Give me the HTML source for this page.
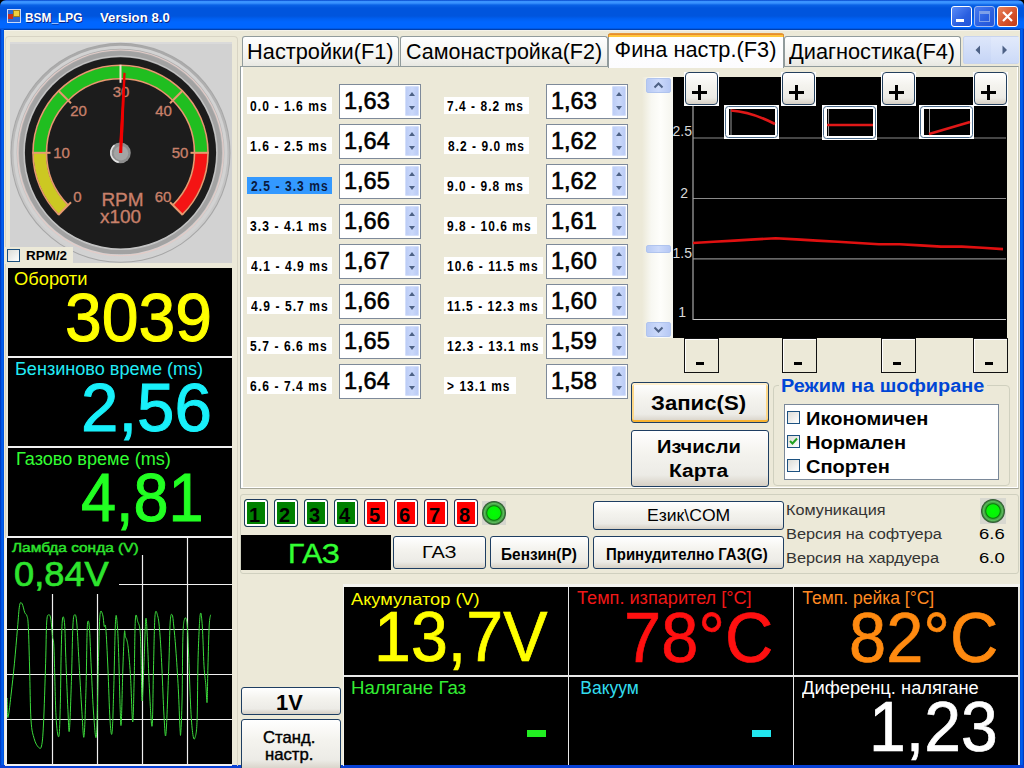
<!DOCTYPE html>
<html><head><meta charset="utf-8">
<style>
*{margin:0;padding:0;box-sizing:border-box}
html,body{width:1024px;height:768px;overflow:hidden}
body{position:relative;background:#ECE9D8;font-family:"Liberation Sans",sans-serif;color:#000}
.a{position:absolute}
.t{position:absolute;white-space:nowrap;line-height:1}
.btn{position:absolute;border:1px solid #1E3E62;border-radius:3px;background:linear-gradient(#FFFFFF 0%,#F4F3EE 40%,#ECEBE6 80%,#D6D0C5 100%);}
.blk{position:absolute;background:#000}
.tab{background:linear-gradient(#FFFFFF,#F3F3EF 70%,#E8E8E2);border:1px solid #919B9C;border-bottom:none;border-radius:3px 3px 0 0}
.lbl{font-size:13.5px;font-weight:bold}
.inp{width:82px;height:35px;border:1px solid #7E8A9A;background:#fff}
.val{font-size:23.5px;-webkit-text-stroke:0.6px #000}
.spin{width:14px;height:30px;background:linear-gradient(90deg,#BACBF5,#CAD8FA 50%,#B8C9F4);border-radius:2px;box-shadow:inset 0 0 0 1px #D4DFFA}
.spin::before{content:"";position:absolute;left:3.5px;top:6px;width:0;height:0;border-left:3.5px solid transparent;border-right:3.5px solid transparent;border-bottom:4px solid #4D6185}
.spin::after{content:"";position:absolute;left:3.5px;top:20px;width:0;height:0;border-left:3.5px solid transparent;border-right:3.5px solid transparent;border-top:4px solid #4D6185}
.sbtn{background:linear-gradient(90deg,#B8CAF4,#CCDAFB 50%,#B6C8F4);border:1px solid #B0C4EE;border-radius:2px}
.cb{width:13px;height:13px;border:1px solid #1C5180;background:linear-gradient(135deg,#DCDCD7,#FFFFFF)}
.led{width:24px;height:28px;border:1px solid #1E3A5E;border-radius:3px;box-shadow:inset 0 0 0 2px #fff}
.grn{width:24px;height:24px;border-radius:50%;background:radial-gradient(circle closest-side,#00FF00 0%,#08F008 52%,#067A06 60%,#3E9E3E 68%,#5CBC5C 80%,#3A7A3A 90%,#2C4A2C 100%)}
.inf{font-size:16px;color:#333}
.dl{font-size:16.5px}
.big{font-size:69px;transform:scaleX(0.93);transform-origin:left}
</style></head><body>
<!-- title bar -->
<div class="a" style="left:0;top:0;width:1024px;height:10px;background:#000"></div>
<div class="a" style="left:0;top:0;width:1024px;height:30px;background:linear-gradient(#0040C8 0px,#3A93FF 1.5px,#3A93FF 3px,#0A62E6 5px,#0055DD 8px,#0055DD 16px,#0060F2 19px,#0066FF 22px,#0066FF 28px,#0040B0 29.5px,#0038A0 30px);border-radius:6px 6px 0 0"></div>
<div class="a" style="left:0;top:29px;width:4px;height:739px;background:linear-gradient(90deg,#0030B0,#0058E8 40%,#0060F0 70%,#0048D0)"></div><div class="a" style="left:4px;top:30px;width:1016px;height:1px;background:#F4F2EA"></div>
<div class="a" style="left:1020px;top:29px;width:4px;height:739px;background:linear-gradient(90deg,#0048D0,#0060F0 30%,#0058E8 60%,#0030B0)"></div>
<div class="a" style="left:0;top:765px;width:1024px;height:3px;background:#0841D6"></div>
<!-- icon -->
<div class="a" style="left:7px;top:9px;width:14px;height:14px;border:1px solid #C8D8F8;background:#2A68D8"></div>
<div class="a" style="left:8px;top:14px;width:5px;height:5px;background:#C83020"></div>
<div class="a" style="left:13px;top:10px;width:7px;height:7px;background:#F0D040;border:1px solid #A08020"></div>
<!-- title buttons -->
<div class="a" style="left:951px;top:6px;width:21px;height:21px;border:1px solid #fff;border-radius:3px;background:linear-gradient(135deg,#5A8CF8,#2A5FE0 60%,#2356D8)"></div>
<div class="a" style="left:956px;top:19px;width:8px;height:3px;background:#fff"></div>
<div class="a" style="left:974px;top:6px;width:21px;height:21px;border:1px solid #9DB8F0;border-radius:3px;background:linear-gradient(135deg,#4A7CF0,#2A5FE0 60%,#2356D8)"></div>
<div class="a" style="left:979px;top:11px;width:11px;height:11px;border:1px solid #7EA0E8;border-top-width:3px"></div>
<div class="a" style="left:997px;top:6px;width:21px;height:21px;border:1px solid #fff;border-radius:3px;background:linear-gradient(135deg,#E8845C,#D4502A 60%,#C03C18)"></div>
<svg class="a" style="left:997px;top:6px" width="21" height="21"><path d="M6 6L15 15M15 6L6 15" stroke="#fff" stroke-width="2.2"/></svg>

<!-- LEFT COLUMN -->
<div class="a" style="left:5px;top:36px;width:233px;height:730px;border:1px solid #D8D4C4;border-bottom:none;border-radius:4px 4px 0 0"></div>
<div class="a" style="left:10px;top:42px;width:222px;height:221px;background:#D2D2D2;box-shadow:inset 0 2px 0 #DADADA"></div>
<svg class="a" style="left:10px;top:42px" width="222" height="221" viewBox="10 42 222 221">
 <defs>
  <radialGradient id="ring" cx="0.5" cy="0.5" r="0.5">
   <stop offset="0.86" stop-color="#8E8E8E"/>
   <stop offset="0.9" stop-color="#E8E8E8"/>
   <stop offset="0.95" stop-color="#B8B8B8"/>
   <stop offset="1" stop-color="#A8A8A8"/>
  </radialGradient>
  <linearGradient id="ringl" x1="0" y1="0" x2="0" y2="1">
   <stop offset="0" stop-color="#A8A8A8"/>
   <stop offset="0.5" stop-color="#BDBDBD"/>
   <stop offset="1" stop-color="#D4D4D4"/>
  </linearGradient>
  <radialGradient id="hub" cx="0.4" cy="0.35" r="0.7">
   <stop offset="0" stop-color="#C8C8C8"/>
   <stop offset="0.55" stop-color="#A8A8A8"/>
   <stop offset="1" stop-color="#6A6A6A"/>
  </radialGradient>
 </defs>
 <circle cx="120.5" cy="152.8" r="110" fill="#A6A6A6"/>
 <circle cx="120.5" cy="152.8" r="109" fill="url(#ringl)"/>
 <circle cx="120.5" cy="152.8" r="105.5" fill="none" stroke="#D2D2D2" stroke-width="3"/>
 <circle cx="120.5" cy="152.8" r="102.8" fill="none" stroke="#E2CCC8" stroke-width="1.2"/>
 <circle cx="120.5" cy="152.8" r="99" fill="none" stroke="#A2A2A2" stroke-width="5"/>
 <circle cx="120.5" cy="152.8" r="96.6" fill="none" stroke="#C4C4C4" stroke-width="1.2"/>
 <circle cx="120.5" cy="152.8" r="95.6" fill="#1C1C1C"/>
<path d="M58.98 214.32 A87.00 87.00 0 0 1 33.50 152.80 L46.00 152.80 A74.50 74.50 0 0 0 67.82 205.48 Z" fill="#CCC822"/>
<path d="M33.50 152.80 A87.00 87.00 0 0 1 207.50 152.80 L195.00 152.80 A74.50 74.50 0 0 0 46.00 152.80 Z" fill="#20BE20"/>
<path d="M207.50 152.80 A87.00 87.00 0 0 1 182.02 214.32 L173.18 205.48 A74.50 74.50 0 0 0 195.00 152.80 Z" fill="#F41414"/>
<path d="M58.63 214.67 A87.50 87.50 0 1 1 182.37 214.67" fill="none" stroke="#E89A70" stroke-width="1.6"/>
<path d="M68.17 205.13 A74.00 74.00 0 1 1 172.83 205.13" fill="none" stroke="#E89A70" stroke-width="1.6"/>

<line x1="58.27" y1="215.03" x2="71.00" y2="202.30" stroke="#E89A70" stroke-width="2"/>
<line x1="32.50" y1="152.80" x2="50.50" y2="152.80" stroke="#E89A70" stroke-width="2"/>
<line x1="58.27" y1="90.57" x2="71.00" y2="103.30" stroke="#E89A70" stroke-width="2"/>
<line x1="120.50" y1="64.80" x2="120.50" y2="82.80" stroke="#F4E0D0" stroke-width="2"/>
<line x1="182.73" y1="90.57" x2="170.00" y2="103.30" stroke="#E89A70" stroke-width="2"/>
<line x1="208.50" y1="152.80" x2="190.50" y2="152.80" stroke="#E89A70" stroke-width="2"/>
<line x1="182.73" y1="215.03" x2="170.00" y2="202.30" stroke="#E89A70" stroke-width="2"/>
 <g font-family="Liberation Sans" font-size="15" fill="#C8806A" stroke="#C8806A" stroke-width="0.35" text-anchor="middle">
  <text x="121" y="97">30</text>
  <text x="78.5" y="116">20</text>
  <text x="163.5" y="116">40</text>
  <text x="61.5" y="158">10</text>
  <text x="180" y="158">50</text>
  <text x="77.5" y="201.5">0</text>
  <text x="163" y="201.5">60</text>
  <text x="122.5" y="206" font-size="19">RPM</text>
  <text x="120.5" y="223" font-size="19">x100</text>
 </g>
 <path d="M118.8 152.8 L123.4 72.6 L125.6 73 L122.4 152.8 Z" fill="#F00000"/>
 <circle cx="120.4" cy="152.8" r="10.4" fill="#8E8E8E"/>
 <circle cx="120.4" cy="152.8" r="9.6" fill="none" stroke="#E4E4E4" stroke-width="1.6" stroke-dasharray="22 60" transform="rotate(100 120.4 152.8)"/>
 <circle cx="121" cy="153.2" r="7.2" fill="#A4A4A4"/>
 <path d="M119 153 L123.6 80 L125.2 80 L122.2 153 Z" fill="#F00000"/>
</svg>
<div class="a" style="left:5px;top:247px;width:68px;height:17px;background:#ECE9D8"></div>
<div class="a" style="left:7px;top:249px;width:13px;height:13px;border:1px solid #1C5180;background:linear-gradient(135deg,#DCDCD7,#FFFFFF)"></div>

<div class="blk" style="left:8px;top:268px;width:224px;height:88px"></div>
<div class="a" style="left:8px;top:356px;width:224px;height:2px;background:#F0F0F0"></div>

<div class="blk" style="left:8px;top:358px;width:224px;height:88px"></div>
<div class="a" style="left:8px;top:446px;width:224px;height:2px;background:#F0F0F0"></div>

<div class="blk" style="left:8px;top:448px;width:224px;height:88px"></div>
<div class="a" style="left:6px;top:536px;width:227px;height:2px;background:#F0F0F0"></div>

<!-- lambda -->
<div class="a" style="left:5px;top:538px;width:227px;height:228px;background:#F2F2F2"></div>
<div class="blk" style="left:7px;top:538px;width:225px;height:226px"></div>
<svg class="a" style="left:7px;top:538px" width="225" height="226" viewBox="7 538 225 226">
 <g stroke="#F0F0F0" stroke-width="1.2">
  <line x1="7" y1="629.5" x2="232" y2="629.5"/>
  <line x1="7" y1="674.5" x2="232" y2="674.5"/>
  <line x1="7" y1="719.5" x2="232" y2="719.5"/>
  <line x1="119" y1="584.5" x2="232" y2="584.5"/>
  <line x1="52.5" y1="594" x2="52.5" y2="764"/>
  <line x1="97.5" y1="594" x2="97.5" y2="764"/>
  <line x1="142.5" y1="555" x2="142.5" y2="764"/>
  <line x1="187.5" y1="538" x2="187.5" y2="764"/>
 </g>
 <path fill="none" stroke="#3CDC3C" stroke-width="1.0" d="M7.10 698.00 C7.17 701.15 7.21 713.24 7.50 716.00 C7.79 718.76 8.09 717.77 8.75 713.75 C9.41 709.73 10.26 701.75 11.25 693.00 C12.24 684.25 13.31 675.07 14.40 663.75 C15.49 652.43 16.59 638.51 17.50 628.30 C18.41 618.09 18.80 609.70 19.60 605.40 C20.41 601.10 21.19 602.47 22.10 603.75 C23.01 605.03 23.96 610.59 24.80 612.70 C25.64 614.81 26.29 613.43 26.90 615.80 C27.51 618.17 27.83 617.12 28.30 626.25 C28.77 635.38 29.13 651.59 29.60 668.00 C30.07 684.41 30.20 707.62 31.00 720.00 C31.80 732.38 32.92 734.02 34.20 738.75 C35.48 743.48 37.02 745.73 38.30 747.00 C39.58 748.27 40.59 750.02 41.50 746.00 C42.41 741.98 42.78 738.39 43.50 724.00 C44.22 709.61 45.04 681.60 45.60 663.75 C46.16 645.90 46.15 630.57 46.70 622.00 C47.25 613.43 48.03 615.32 48.75 614.80 C49.47 614.27 50.14 615.17 50.80 619.00 C51.46 622.83 51.94 631.45 52.50 636.70 C53.06 641.95 53.39 635.16 54.00 649.00 C54.61 662.84 55.17 700.45 56.00 715.80 C56.83 731.15 58.02 737.79 58.75 736.70 C59.48 735.62 59.76 724.77 60.20 709.60 C60.64 694.43 60.85 665.86 61.25 650.00 C61.65 634.14 61.91 623.55 62.50 619.00 C63.09 614.45 64.02 617.26 64.60 624.00 C65.18 630.74 65.22 642.52 65.80 657.50 C66.38 672.48 67.27 696.84 67.90 709.60 C68.53 722.36 68.77 735.93 69.40 730.40 C70.03 724.87 70.89 696.27 71.50 678.00 C72.11 659.73 72.36 637.06 72.90 626.00 C73.44 614.94 73.93 615.50 74.60 614.80 C75.27 614.10 75.97 614.53 76.70 622.00 C77.43 629.47 77.84 641.80 78.75 657.50 C79.66 673.20 80.98 697.84 81.90 711.70 C82.82 725.56 83.28 740.72 84.00 736.70 C84.72 732.68 85.46 706.99 86.00 688.75 C86.54 670.51 86.73 644.36 87.10 632.50 C87.47 620.64 87.66 621.37 88.10 621.00 C88.54 620.63 89.05 622.17 89.60 630.40 C90.15 638.62 90.52 653.05 91.25 668.00 C91.98 682.95 92.83 704.14 93.75 715.80 C94.67 727.45 95.67 744.80 96.50 734.60 C97.33 724.40 97.89 678.47 98.50 657.50 C99.11 636.53 99.27 622.27 100.00 614.80 C100.73 607.33 101.97 612.80 102.70 614.80 C103.44 616.80 103.66 623.89 104.20 626.25 C104.74 628.61 105.15 620.99 105.80 628.30 C106.45 635.61 107.17 651.95 107.90 668.00 C108.64 684.05 109.27 708.71 110.00 720.00 C110.73 731.29 111.44 737.97 112.10 732.50 C112.76 727.03 113.14 708.52 113.75 688.75 C114.36 668.98 114.94 630.13 115.60 619.50 C116.26 608.87 116.95 621.35 117.50 628.00 C118.05 634.65 118.28 643.22 118.75 657.50 C119.22 671.78 119.76 698.14 120.20 709.60 C120.64 721.06 120.78 730.28 121.25 723.00 C121.72 715.72 122.35 683.84 122.90 668.00 C123.45 652.16 123.96 637.98 124.40 632.50 C124.84 627.02 124.93 635.21 125.40 636.70 C125.87 638.19 126.56 638.50 127.10 641.00 C127.64 643.50 127.89 644.52 128.50 651.00 C129.11 657.48 129.87 665.58 130.60 678.00 C131.33 690.42 132.07 722.00 132.70 722.00 C133.33 722.00 133.73 696.02 134.20 678.00 C134.67 659.98 134.75 628.80 135.40 619.00 C136.05 609.20 137.09 620.08 137.90 622.00 C138.71 623.92 139.46 624.58 140.00 630.00 C140.54 635.42 140.63 640.58 141.00 653.00 C141.37 665.42 141.54 700.21 142.10 701.00 C142.66 701.79 143.55 671.85 144.20 657.50 C144.85 643.15 145.26 622.64 145.80 619.00 C146.34 615.36 146.67 624.49 147.30 636.70 C147.93 648.91 148.56 673.12 149.40 688.75 C150.24 704.38 151.38 729.63 152.10 726.00 C152.82 722.37 152.99 687.25 153.50 668.00 C154.01 648.75 154.27 625.10 155.00 616.00 C155.73 606.90 156.86 613.11 157.70 616.00 C158.54 618.89 159.06 623.40 159.80 632.50 C160.54 641.60 161.17 653.42 161.90 668.00 C162.63 682.58 163.28 704.34 164.00 715.80 C164.72 727.26 165.17 741.87 166.00 733.50 C166.83 725.13 168.02 687.51 168.75 668.00 C169.48 648.49 169.60 631.31 170.20 622.00 C170.80 612.69 171.58 614.10 172.20 614.80 C172.82 615.50 173.12 620.01 173.75 626.00 C174.38 631.99 175.00 638.02 175.80 649.00 C176.60 659.98 177.57 674.87 178.30 688.75 C179.03 702.63 179.56 720.64 180.00 728.30 C180.44 735.96 180.43 737.63 180.80 732.50 C181.17 727.37 181.73 715.76 182.10 699.00 C182.47 682.24 182.46 650.70 182.90 636.70 C183.34 622.70 183.87 621.22 184.60 619.00 C185.33 616.78 186.37 617.26 187.10 624.00 C187.83 630.74 188.10 642.52 188.75 657.50 C189.40 672.48 190.07 696.11 190.80 709.60 C191.53 723.09 192.17 729.68 192.90 734.60 C193.63 739.52 194.27 740.25 195.00 737.70 C195.73 735.15 196.56 734.03 197.10 720.00 C197.64 705.97 197.56 675.91 198.10 657.50 C198.64 639.09 199.46 620.31 200.20 614.80 C200.94 609.29 201.64 617.08 202.30 626.00 C202.97 634.92 203.39 655.54 204.00 665.80 C204.61 676.05 205.26 678.21 205.80 684.60 C206.34 690.99 206.73 705.20 207.10 702.30 C207.47 699.39 207.53 681.35 207.90 668.00 C208.27 654.65 208.73 635.31 209.20 626.00 C209.67 616.69 210.35 616.76 210.60 614.80"/>
</svg>
<div class="blk" style="left:7px;top:538px;width:135px;height:17px"></div>
<div class="blk" style="left:7px;top:555px;width:112px;height:39px"></div>

<!-- RIGHT: tabs -->
<!-- tab strip -->
<div class="a" style="left:240px;top:66px;width:779px;height:423px;border:1px solid #919B9C;border-bottom-color:#A8A898;border-right-color:#C8C8B8;background:#ECE9D8;box-shadow:inset -1px -1px 0 #FFFFFF"></div>
<div class="a" style="left:241px;top:67px;width:2px;height:421px;background:#fff"></div>
<div class="a tab" style="left:242px;top:36px;width:157px;height:30px"></div>
<div class="a tab" style="left:400px;top:36px;width:208px;height:30px"></div>
<div class="a tab" style="left:784px;top:36px;width:177px;height:30px"></div>
<div class="a" style="left:608px;top:34px;width:176px;height:34px;background:linear-gradient(#FFFFFF,#FCFCFE);border:1px solid #919B9C;border-bottom:none;border-top:none"></div>
<div class="a" style="left:608px;top:33px;width:176px;height:4px;background:#E68B2C;border-radius:3px 3px 0 0;border-top:1px solid #E69A3C"></div>
<div class="a" style="left:609px;top:35px;width:174px;height:2px;background:#FFC73C"></div>
<div class="a" style="left:963px;top:36px;width:56px;height:28px;background:linear-gradient(#DDE6FA,#C6D5F6);border:1px solid #C8D4EE;border-radius:2px"></div>
<div class="a" style="left:991px;top:37px;width:28px;height:26px;background:linear-gradient(#E2EAFB,#CCDAF8)"></div><svg class="a" style="left:963px;top:36px" width="56" height="28"><path d="M12.5 14 L17 9.5 L17 18.5Z" fill="#4D6185"/><path d="M44 14 L39.5 9.5 L39.5 18.5Z" fill="#4D6185"/></svg>

<div class="a" style="left:247px;top:97px;width:85px;height:17px;background:#FFFFFF"></div>
<div class="a inp" style="left:339px;top:84px"></div><div class="t val" style="left:344px;top:90px">1,63</div>
<div class="a spin" style="left:405px;top:86px"></div>
<div class="a" style="left:444px;top:97px;width:85px;height:17px;background:#fff"></div>
<div class="a inp" style="left:546px;top:84px"></div><div class="t val" style="left:551px;top:90px">1,63</div>
<div class="a spin" style="left:612px;top:86px"></div>
<div class="a" style="left:247px;top:137px;width:85px;height:17px;background:#FFFFFF"></div>
<div class="a inp" style="left:339px;top:124px"></div><div class="t val" style="left:344px;top:130px">1,64</div>
<div class="a spin" style="left:405px;top:126px"></div>
<div class="a" style="left:444px;top:137px;width:85px;height:17px;background:#fff"></div>
<div class="a inp" style="left:546px;top:124px"></div><div class="t val" style="left:551px;top:130px">1,62</div>
<div class="a spin" style="left:612px;top:126px"></div>
<div class="a" style="left:247px;top:177px;width:85px;height:17px;background:#3399FF"></div>
<div class="a inp" style="left:339px;top:164px"></div><div class="t val" style="left:344px;top:170px">1,65</div>
<div class="a spin" style="left:405px;top:166px"></div>
<div class="a" style="left:444px;top:177px;width:85px;height:17px;background:#fff"></div>
<div class="a inp" style="left:546px;top:164px"></div><div class="t val" style="left:551px;top:170px">1,62</div>
<div class="a spin" style="left:612px;top:166px"></div>
<div class="a" style="left:247px;top:217px;width:85px;height:17px;background:#FFFFFF"></div>
<div class="a inp" style="left:339px;top:204px"></div><div class="t val" style="left:344px;top:210px">1,66</div>
<div class="a spin" style="left:405px;top:206px"></div>
<div class="a" style="left:444px;top:217px;width:93px;height:17px;background:#fff"></div>
<div class="a inp" style="left:546px;top:204px"></div><div class="t val" style="left:551px;top:210px">1,61</div>
<div class="a spin" style="left:612px;top:206px"></div>
<div class="a" style="left:247px;top:257px;width:85px;height:17px;background:#FFFFFF"></div>
<div class="a inp" style="left:339px;top:244px"></div><div class="t val" style="left:344px;top:250px">1,67</div>
<div class="a spin" style="left:405px;top:246px"></div>
<div class="a" style="left:444px;top:257px;width:99px;height:17px;background:#fff"></div>
<div class="a inp" style="left:546px;top:244px"></div><div class="t val" style="left:551px;top:250px">1,60</div>
<div class="a spin" style="left:612px;top:246px"></div>
<div class="a" style="left:247px;top:297px;width:85px;height:17px;background:#FFFFFF"></div>
<div class="a inp" style="left:339px;top:284px"></div><div class="t val" style="left:344px;top:290px">1,66</div>
<div class="a spin" style="left:405px;top:286px"></div>
<div class="a" style="left:444px;top:297px;width:99px;height:17px;background:#fff"></div>
<div class="a inp" style="left:546px;top:284px"></div><div class="t val" style="left:551px;top:290px">1,60</div>
<div class="a spin" style="left:612px;top:286px"></div>
<div class="a" style="left:247px;top:337px;width:85px;height:17px;background:#FFFFFF"></div>
<div class="a inp" style="left:339px;top:324px"></div><div class="t val" style="left:344px;top:330px">1,65</div>
<div class="a spin" style="left:405px;top:326px"></div>
<div class="a" style="left:444px;top:337px;width:99px;height:17px;background:#fff"></div>
<div class="a inp" style="left:546px;top:324px"></div><div class="t val" style="left:551px;top:330px">1,59</div>
<div class="a spin" style="left:612px;top:326px"></div>
<div class="a" style="left:247px;top:377px;width:85px;height:17px;background:#FFFFFF"></div>
<div class="a inp" style="left:339px;top:364px"></div><div class="t val" style="left:344px;top:370px">1,64</div>
<div class="a spin" style="left:405px;top:366px"></div>
<div class="a" style="left:444px;top:377px;width:72px;height:17px;background:#fff"></div>
<div class="a inp" style="left:546px;top:364px"></div><div class="t val" style="left:551px;top:370px">1,58</div>
<div class="a spin" style="left:612px;top:366px"></div>
<!-- chart -->
<div class="a" style="left:642px;top:77px;width:31px;height:261px;background:linear-gradient(90deg,#ECE9D8 0%,#F8F8F2 30%,#FEFEFB 60%,#F5F5EE 100%)"></div>
<div class="a sbtn" style="left:646px;top:78px;width:25px;height:15px"></div>
<svg class="a" style="left:646px;top:78px" width="25" height="15"><path d="M8.5 9.5 L12.5 5.5 L16.5 9.5" fill="none" stroke="#4D6185" stroke-width="2"/></svg>
<div class="a sbtn" style="left:646px;top:245px;width:25px;height:8px"></div>
<div class="a sbtn" style="left:646px;top:322px;width:25px;height:15px"></div>
<svg class="a" style="left:646px;top:322px" width="25" height="15"><path d="M8.5 5.5 L12.5 9.5 L16.5 5.5" fill="none" stroke="#4D6185" stroke-width="2"/></svg>
<div class="blk" style="left:673px;top:77px;width:334px;height:261px"></div>
<svg class="a" style="left:673px;top:77px" width="334" height="261" viewBox="673 77 334 261">
 <g stroke="#8A8A8A" stroke-width="1.2">
  <line x1="693" y1="138" x2="1006" y2="138"/>
  <line x1="693" y1="198.5" x2="1006" y2="198.5"/>
  <line x1="693" y1="258.8" x2="1006" y2="258.8"/>
  <line x1="693" y1="319.5" x2="1006" y2="319.5" stroke="#C8C8C8"/>
  <line x1="693" y1="105" x2="693" y2="320" stroke="#A8A8A8"/>
 </g>
 <g font-family="Liberation Sans" font-size="14" fill="#D8D8D8" text-anchor="end">
  <text x="692" y="136">2.5</text>
  <text x="688" y="197.5">2</text>
  <text x="692" y="257.5">1.5</text>
  <text x="686" y="317">1</text>
 </g>
 <polyline fill="none" stroke="#E01010" stroke-width="2.6" stroke-linejoin="round" points="693.0,243.0 713.7,241.8 734.3,240.6 755.0,239.4 775.7,238.2 796.3,239.4 817.0,240.6 837.7,241.8 858.3,243.0 879.0,244.2 899.7,244.2 920.3,245.4 941.0,246.6 961.7,246.6 982.3,247.8 1003.0,249.1"/>
 <!-- thumbs -->
 <g>
  <rect x="724" y="105" width="55" height="34" fill="#fff"/>
  <rect x="725.5" y="106.5" width="52" height="31" rx="3" fill="none" stroke="#4A6A8A" stroke-width="1"/>
  <rect x="729" y="109" width="46" height="26" fill="#000"/>
  <line x1="731" y1="109" x2="731" y2="135" stroke="#999" stroke-width="1"/>
  <path d="M731 110.5 Q752 112 775 124" fill="none" stroke="#E01818" stroke-width="2.6"/>
  <rect x="822" y="105" width="55" height="35" fill="#fff"/>
  <rect x="823.5" y="106.5" width="52" height="32" rx="3" fill="none" stroke="#4A6A8A" stroke-width="1"/>
  <rect x="827" y="109" width="46" height="27" fill="#000"/>
  <line x1="828.5" y1="109" x2="828.5" y2="136" stroke="#999" stroke-width="1"/>
  <line x1="827" y1="125" x2="873" y2="125" stroke="#E01818" stroke-width="2.6"/>
  <rect x="919" y="105" width="55" height="34" fill="#fff"/>
  <rect x="920.5" y="106.5" width="52" height="31" rx="3" fill="none" stroke="#4A6A8A" stroke-width="1"/>
  <rect x="924" y="109" width="46" height="26" fill="#000"/>
  <line x1="929.5" y1="109" x2="929.5" y2="135" stroke="#999" stroke-width="1"/>
  <path d="M929 134 L970 122" fill="none" stroke="#E01818" stroke-width="2.6"/>
 </g>
</svg>
<div class="a" style="left:684px;top:72px;width:35px;height:34px;background:#fff"></div><div class="btn" style="left:685px;top:72px;width:33px;height:33px;border-radius:4px;border-color:#24405E"></div><div class="a" style="left:692px;top:91px;width:15px;height:3px;background:#000"></div><div class="a" style="left:698px;top:85px;width:3px;height:15px;background:#000"></div>
<div class="a" style="left:781px;top:72px;width:35px;height:34px;background:#fff"></div><div class="btn" style="left:782px;top:72px;width:33px;height:33px;border-radius:4px;border-color:#24405E"></div><div class="a" style="left:789px;top:91px;width:15px;height:3px;background:#000"></div><div class="a" style="left:795px;top:85px;width:3px;height:15px;background:#000"></div>
<div class="a" style="left:881px;top:72px;width:35px;height:34px;background:#fff"></div><div class="btn" style="left:882px;top:72px;width:33px;height:33px;border-radius:4px;border-color:#24405E"></div><div class="a" style="left:889px;top:91px;width:15px;height:3px;background:#000"></div><div class="a" style="left:895px;top:85px;width:3px;height:15px;background:#000"></div>
<div class="a" style="left:973px;top:72px;width:35px;height:34px;background:#fff"></div><div class="btn" style="left:974px;top:72px;width:33px;height:33px;border-radius:4px;border-color:#24405E"></div><div class="a" style="left:981px;top:91px;width:15px;height:3px;background:#000"></div><div class="a" style="left:987px;top:85px;width:3px;height:15px;background:#000"></div>
<div class="a" style="left:684px;top:338px;width:35px;height:35px;border:1px solid #111;background:#ECE9D8;box-shadow:inset 1px 1px 0 #fff"></div><div class="a" style="left:696px;top:362px;width:8px;height:3px;background:#000"></div>
<div class="a" style="left:782px;top:338px;width:35px;height:35px;border:1px solid #111;background:#ECE9D8;box-shadow:inset 1px 1px 0 #fff"></div><div class="a" style="left:794px;top:362px;width:8px;height:3px;background:#000"></div>
<div class="a" style="left:881px;top:338px;width:35px;height:35px;border:1px solid #111;background:#ECE9D8;box-shadow:inset 1px 1px 0 #fff"></div><div class="a" style="left:893px;top:362px;width:8px;height:3px;background:#000"></div>
<div class="a" style="left:973px;top:338px;width:35px;height:35px;border:1px solid #111;background:#ECE9D8;box-shadow:inset 1px 1px 0 #fff"></div><div class="a" style="left:985px;top:362px;width:8px;height:3px;background:#000"></div>
<!-- buttons -->
<div class="btn" style="left:631px;top:382px;width:138px;height:41px;box-shadow:inset 0 -2px 0 #F8B330,inset 0 2px 0 #FFF0CF,inset 2px 0 0 #FDD889,inset -2px 0 0 #FDD889"></div>
<div class="btn" style="left:631px;top:430px;width:138px;height:57px"></div>
<!-- group box -->
<div class="a" style="left:773px;top:385px;width:237px;height:101px;border:1px solid #D0D0BF;border-radius:4px"></div>
<div class="a" style="left:779px;top:376px;width:208px;height:20px;background:#ECE9D8"></div>
<div class="a" style="left:784px;top:404px;width:215px;height:76px;border:1px solid #7A8899;background:#fff"></div>
<div class="a cb" style="left:787px;top:411px"></div>
<div class="a cb" style="left:787px;top:435px"></div>
<svg class="a" style="left:787px;top:435px" width="13" height="13"><path d="M3 6 L5.5 8.5 L10 3.5" fill="none" stroke="#21A121" stroke-width="2"/></svg>
<div class="a cb" style="left:787px;top:459px"></div>
<!-- bottom group -->
<div class="a" style="left:240px;top:494px;width:779px;height:80px;border:1px solid #D0D0BF;border-radius:3px"></div>
<div class="a led" style="left:244px;top:499px;background:#008000"></div><div class="t" style="left:244px;top:503px;width:24px;text-align:center;font-size:20px;font-weight:bold;color:#000;margin-top:1.5px;margin-left:-1.5px">1</div>
<div class="a led" style="left:274px;top:499px;background:#008000"></div><div class="t" style="left:274px;top:503px;width:24px;text-align:center;font-size:20px;font-weight:bold;color:#000;margin-top:1.5px;margin-left:-1.5px">2</div>
<div class="a led" style="left:304px;top:499px;background:#008000"></div><div class="t" style="left:304px;top:503px;width:24px;text-align:center;font-size:20px;font-weight:bold;color:#000;margin-top:1.5px;margin-left:-1.5px">3</div>
<div class="a led" style="left:334px;top:499px;background:#008000"></div><div class="t" style="left:334px;top:503px;width:24px;text-align:center;font-size:20px;font-weight:bold;color:#000;margin-top:1.5px;margin-left:-1.5px">4</div>
<div class="a led" style="left:364px;top:499px;background:#FF0000"></div><div class="t" style="left:364px;top:503px;width:24px;text-align:center;font-size:20px;font-weight:bold;color:#000;margin-top:1.5px;margin-left:-1.5px">5</div>
<div class="a led" style="left:394px;top:499px;background:#FF0000"></div><div class="t" style="left:394px;top:503px;width:24px;text-align:center;font-size:20px;font-weight:bold;color:#000;margin-top:1.5px;margin-left:-1.5px">6</div>
<div class="a led" style="left:424px;top:499px;background:#FF0000"></div><div class="t" style="left:424px;top:503px;width:24px;text-align:center;font-size:20px;font-weight:bold;color:#000;margin-top:1.5px;margin-left:-1.5px">7</div>
<div class="a led" style="left:454px;top:499px;background:#FF0000"></div><div class="t" style="left:454px;top:503px;width:24px;text-align:center;font-size:20px;font-weight:bold;color:#000;margin-top:1.5px;margin-left:-1.5px">8</div>
<div class="a" style="left:482px;top:501px;width:24px;height:24px;background:#D6D6CE"></div>
<div class="a grn" style="left:482px;top:501px"></div>
<div class="blk" style="left:241px;top:535px;width:150px;height:35px"></div>
<div class="btn" style="left:393px;top:536px;width:93px;height:33px"></div>
<div class="btn" style="left:490px;top:536px;width:99px;height:33px"></div>
<div class="btn" style="left:593px;top:536px;width:191px;height:33px"></div>
<div class="btn" style="left:593px;top:501px;width:191px;height:29px"></div>
<div class="a" style="left:980px;top:498px;width:26px;height:26px;background:#D8D8D0"></div>
<div class="a grn" style="left:981px;top:499px"></div>
<!-- left-bottom panel border -->

<div class="btn" style="left:241px;top:687px;width:100px;height:28px"></div>
<div class="btn" style="left:241px;top:719px;width:100px;height:52px"></div>
<!-- data grid -->
<div class="a" style="left:343px;top:584px;width:677px;height:3px;background:#F4F4F0"></div>
<div class="a" style="left:343px;top:584px;width:1px;height:182px;background:#F4F4F0"></div>
<div class="blk" style="left:344px;top:587px;width:675px;height:178px"></div>
<div class="a" style="left:344px;top:675px;width:675px;height:2px;background:#E8E8E8"></div>
<div class="a" style="left:568px;top:587px;width:1px;height:178px;background:#E8E8E8"></div>
<div class="a" style="left:793px;top:587px;width:1px;height:178px;background:#E8E8E8"></div>
<div class="a" style="left:1018px;top:587px;width:1px;height:178px;background:#E8E8E8"></div>
<div class="a" style="left:527px;top:730px;width:19px;height:7px;background:#22EE22"></div>
<div class="a" style="left:752px;top:730px;width:19px;height:7px;background:#22E6EE"></div>


<div class="t" style="left:25.02px;top:10.6px;font-size:13.5px;font-weight:bold;color:#FFFFFF;transform:scaleX(0.8797);transform-origin:0 0;text-shadow:1px 1px 0 #0A2280">BSM_LPG</div>
<div class="t" style="left:99.7px;top:10.6px;font-size:13.5px;font-weight:bold;color:#FFFFFF;transform:scaleX(0.9789);transform-origin:0 0;text-shadow:1px 1px 0 #0A2280">Version 8.0</div>
<div class="t" style="left:25.67px;top:249.0px;font-size:13.0px;font-weight:bold;color:#000;transform:scaleX(1.0342);transform-origin:0 0">RPM/2</div>
<div class="t" style="left:13.55px;top:271.4px;font-size:17.5px;font-weight:normal;color:#FFFF00;transform:scaleX(1.0456);transform-origin:0 0">Обороти</div>
<div class="t" style="left:64.69px;top:283.2px;font-size:69.25px;font-weight:normal;color:#FFFF00;transform:scaleX(0.9544);transform-origin:0 0;-webkit-text-stroke:1.0px #FFFF00">3039</div>
<div class="t" style="left:14.67px;top:361.4px;font-size:17.5px;font-weight:normal;color:#22ECF6;transform:scaleX(1.0328);transform-origin:0 0">Бензиново време (ms)</div>
<div class="t" style="left:80.59px;top:373.2px;font-size:69.25px;font-weight:normal;color:#18F0FA;transform:scaleX(0.9713);transform-origin:0 0;-webkit-text-stroke:1.0px #18F0FA">2,56</div>
<div class="t" style="left:15.72px;top:451.4px;font-size:17.5px;font-weight:normal;color:#33FF33;transform:scaleX(1.0348);transform-origin:0 0">Газово време (ms)</div>
<div class="t" style="left:81.49px;top:463.2px;font-size:69.25px;font-weight:normal;color:#22FF22;transform:scaleX(0.9099);transform-origin:0 0;-webkit-text-stroke:1.0px #22FF22">4,81</div>
<div class="t" style="left:11.5px;top:540.8px;font-size:13.0px;font-weight:normal;color:#2EE42E;transform:scaleX(1.1868);transform-origin:0 0;-webkit-text-stroke:0.45px #2EE42E">Ламбда сонда (V)</div>
<div class="t" style="left:13.89px;top:556.9px;font-size:35.75px;font-weight:normal;color:#2EE42E;transform:scaleX(1.014);transform-origin:0 0;-webkit-text-stroke:0.7px #2EE42E">0,84V</div>
<div class="t" style="left:247.1px;top:40.8px;font-size:21.75px;font-weight:normal;color:#000">Настройки(F1)</div>
<div class="t" style="left:406.21px;top:40.8px;font-size:21.75px;font-weight:normal;color:#000;transform:scaleX(0.9888);transform-origin:0 0">Самонастройка(F2)</div>
<div class="t" style="left:614.6px;top:38.8px;font-size:21.75px;font-weight:normal;color:#000">Фина настр.(F3)</div>
<div class="t" style="left:789.1px;top:42.0px;font-size:21.25px;font-weight:normal;color:#000;transform:scaleX(1.0242);transform-origin:0 0">Диагностика(F4)</div>
<div class="t" style="left:650.91px;top:392.8px;font-size:20.25px;font-weight:bold;color:#000;transform:scaleX(1.0941);transform-origin:0 0">Запис(S)</div>
<div class="t" style="left:657.26px;top:436.5px;font-size:19.25px;font-weight:bold;color:#000;transform:scaleX(1.041);transform-origin:0 0">Изчисли</div>
<div class="t" style="left:668.91px;top:460.75px;font-size:19.25px;font-weight:bold;color:#000;transform:scaleX(1.0906);transform-origin:0 0">Карта</div>
<div class="t" style="left:781.3px;top:377.4px;font-size:18.0px;font-weight:bold;color:#0046D5;transform:scaleX(1.1044);transform-origin:0 0">Режим на шофиране</div>
<div class="t" style="left:805.63px;top:409.7px;font-size:18.75px;font-weight:bold;color:#000;transform:scaleX(1.0679);transform-origin:0 0">Икономичен</div>
<div class="t" style="left:805.63px;top:433.7px;font-size:18.75px;font-weight:bold;color:#000;transform:scaleX(1.0679);transform-origin:0 0">Нормален</div>
<div class="t" style="left:805.63px;top:457.7px;font-size:18.75px;font-weight:bold;color:#000;transform:scaleX(1.0679);transform-origin:0 0">Спортен</div>
<div class="t" style="left:287.82px;top:540.0px;font-size:27.5px;font-weight:normal;color:#33FF33;transform:scaleX(1.0889);transform-origin:0 0;-webkit-text-stroke:0.4px #33FF33">ГАЗ</div>
<div class="t" style="left:422.21px;top:545.2px;font-size:16.75px;font-weight:normal;color:#000;transform:scaleX(1.1889);transform-origin:0 0">ГАЗ</div>
<div class="t" style="left:500.75px;top:545.7px;font-size:16.25px;font-weight:bold;color:#000;transform:scaleX(0.9474);transform-origin:0 0">Бензин(P)</div>
<div class="t" style="left:605.68px;top:545.7px;font-size:16.25px;font-weight:bold;color:#000;transform:scaleX(0.9213);transform-origin:0 0">Принудително ГАЗ(G)</div>
<div class="t" style="left:646.57px;top:507.3px;font-size:17.0px;font-weight:normal;color:#000;transform:scaleX(1.0346);transform-origin:0 0">Език\COM</div>
<div class="t" style="left:785.9px;top:502.8px;font-size:14.75px;font-weight:normal;color:#333;transform:scaleX(1.0989);transform-origin:0 0">Комуникация</div>
<div class="t" style="left:785.95px;top:526.3px;font-size:15.5px;font-weight:normal;color:#333;transform:scaleX(1.0544);transform-origin:0 0">Версия на софтуера</div>
<div class="t" style="left:785.95px;top:550.1px;font-size:15.5px;font-weight:normal;color:#333;transform:scaleX(1.0544);transform-origin:0 0">Версия на хардуера</div>
<div class="t" style="left:978.81px;top:526.3px;font-size:15.5px;font-weight:normal;color:#000;transform:scaleX(1.19);transform-origin:0 0">6.6</div>
<div class="t" style="left:978.81px;top:550.1px;font-size:15.5px;font-weight:normal;color:#000;transform:scaleX(1.19);transform-origin:0 0">6.0</div>
<div class="t" style="left:276.27px;top:693.2px;font-size:21.25px;font-weight:bold;color:#000;transform:scaleX(1.028);transform-origin:0 0">1V</div>
<div class="t" style="left:263.04px;top:729.5px;font-size:15.75px;font-weight:normal;color:#000;transform:scaleX(1.0574);transform-origin:0 0;-webkit-text-stroke:0.4px #000">Станд.</div>
<div class="t" style="left:264.94px;top:746.8px;font-size:15.75px;font-weight:normal;color:#000;transform:scaleX(1.0591);transform-origin:0 0;-webkit-text-stroke:0.4px #000">настр.</div>
<div class="t" style="left:350.6px;top:591.5px;font-size:16.0px;font-weight:normal;color:#FFFF00;transform:scaleX(1.1375);transform-origin:0 0">Акумулатор (V)</div>
<div class="t" style="left:374.48px;top:602.3px;font-size:70.25px;font-weight:normal;color:#FFFF00;transform:scaleX(0.9447);transform-origin:0 0;-webkit-text-stroke:0.7px #FFFF00">13,7V</div>
<div class="t" style="left:577.3px;top:590.4px;font-size:17.5px;font-weight:normal;color:#F01818;transform:scaleX(1.0359);transform-origin:0 0">Темп. изпарител [°C]</div>
<div class="t" style="left:623.72px;top:604.3px;font-size:69.5px;font-weight:normal;color:#FF1010;transform:scaleX(0.9607);transform-origin:0 0;-webkit-text-stroke:0.7px #FF1010">78°C</div>
<div class="t" style="left:802.3px;top:590.4px;font-size:17.5px;font-weight:normal;color:#FF8A22">Темп. рейка [°C]</div>
<div class="t" style="left:848.72px;top:604.3px;font-size:69.5px;font-weight:normal;color:#FF8A10;transform:scaleX(0.9607);transform-origin:0 0;-webkit-text-stroke:0.7px #FF8A10">82°C</div>
<div class="t" style="left:350.83px;top:680.4px;font-size:17.5px;font-weight:normal;color:#33EE33;transform:scaleX(1.0651);transform-origin:0 0">Налягане Газ</div>
<div class="t" style="left:580.3px;top:680.4px;font-size:17.5px;font-weight:normal;color:#33DDEE">Вакуум</div>
<div class="t" style="left:801.7px;top:680.4px;font-size:17.5px;font-weight:normal;color:#FFFFFF;transform:scaleX(1.0464);transform-origin:0 0">Диференц. налягане</div>
<div class="t" style="left:869.44px;top:693.3px;font-size:69.5px;font-weight:normal;color:#FFFFFF;transform:scaleX(0.9512);transform-origin:0 0;-webkit-text-stroke:0.7px #FFFFFF">1,23</div>
<div class="t" style="left:250.07px;top:98.8px;font-size:14.5px;font-weight:bold;color:#000;transform:scaleX(0.8297);transform-origin:0 0;letter-spacing:1.3px">0.0 - 1.6 ms</div>
<div class="t" style="left:250.07px;top:138.8px;font-size:14.5px;font-weight:bold;color:#000;transform:scaleX(0.8297);transform-origin:0 0;letter-spacing:1.3px">1.6 - 2.5 ms</div>
<div class="t" style="left:250.9px;top:178.8px;font-size:14.5px;font-weight:bold;color:#0A1A40;transform:scaleX(0.8297);transform-origin:0 0;letter-spacing:1.3px">2.5 - 3.3 ms</div>
<div class="t" style="left:250.07px;top:218.8px;font-size:14.5px;font-weight:bold;color:#000;transform:scaleX(0.8297);transform-origin:0 0;letter-spacing:1.3px">3.3 - 4.1 ms</div>
<div class="t" style="left:250.9px;top:258.8px;font-size:14.5px;font-weight:bold;color:#000;transform:scaleX(0.8297);transform-origin:0 0;letter-spacing:1.3px">4.1 - 4.9 ms</div>
<div class="t" style="left:250.9px;top:298.8px;font-size:14.5px;font-weight:bold;color:#000;transform:scaleX(0.8297);transform-origin:0 0;letter-spacing:1.3px">4.9 - 5.7 ms</div>
<div class="t" style="left:250.07px;top:338.8px;font-size:14.5px;font-weight:bold;color:#000;transform:scaleX(0.8297);transform-origin:0 0;letter-spacing:1.3px">5.7 - 6.6 ms</div>
<div class="t" style="left:250.07px;top:378.8px;font-size:14.5px;font-weight:bold;color:#000;transform:scaleX(0.8297);transform-origin:0 0;letter-spacing:1.3px">6.6 - 7.4 ms</div>
<div class="t" style="left:447.38px;top:98.8px;font-size:14.5px;font-weight:bold;color:#000;transform:scaleX(0.8209);transform-origin:0 0;letter-spacing:1.3px">7.4 - 8.2 ms</div>
<div class="t" style="left:448.2px;top:138.8px;font-size:14.5px;font-weight:bold;color:#000;transform:scaleX(0.8209);transform-origin:0 0;letter-spacing:1.3px">8.2 - 9.0 ms</div>
<div class="t" style="left:447.38px;top:178.8px;font-size:14.5px;font-weight:bold;color:#000;transform:scaleX(0.8209);transform-origin:0 0;letter-spacing:1.3px">9.0 - 9.8 ms</div>
<div class="t" style="left:447.38px;top:218.8px;font-size:14.5px;font-weight:bold;color:#000;transform:scaleX(0.8209);transform-origin:0 0;letter-spacing:1.3px">9.8 - 10.6 ms</div>
<div class="t" style="left:447.38px;top:258.8px;font-size:14.5px;font-weight:bold;color:#000;transform:scaleX(0.8209);transform-origin:0 0;letter-spacing:1.3px">10.6 - 11.5 ms</div>
<div class="t" style="left:447.38px;top:298.8px;font-size:14.5px;font-weight:bold;color:#000;transform:scaleX(0.8209);transform-origin:0 0;letter-spacing:1.3px">11.5 - 12.3 ms</div>
<div class="t" style="left:447.38px;top:338.8px;font-size:14.5px;font-weight:bold;color:#000;transform:scaleX(0.8209);transform-origin:0 0;letter-spacing:1.3px">12.3 - 13.1 ms</div>
<div class="t" style="left:447.38px;top:378.8px;font-size:14.5px;font-weight:bold;color:#000;transform:scaleX(0.8209);transform-origin:0 0;letter-spacing:1.3px">&gt; 13.1 ms</div>
</body></html>
